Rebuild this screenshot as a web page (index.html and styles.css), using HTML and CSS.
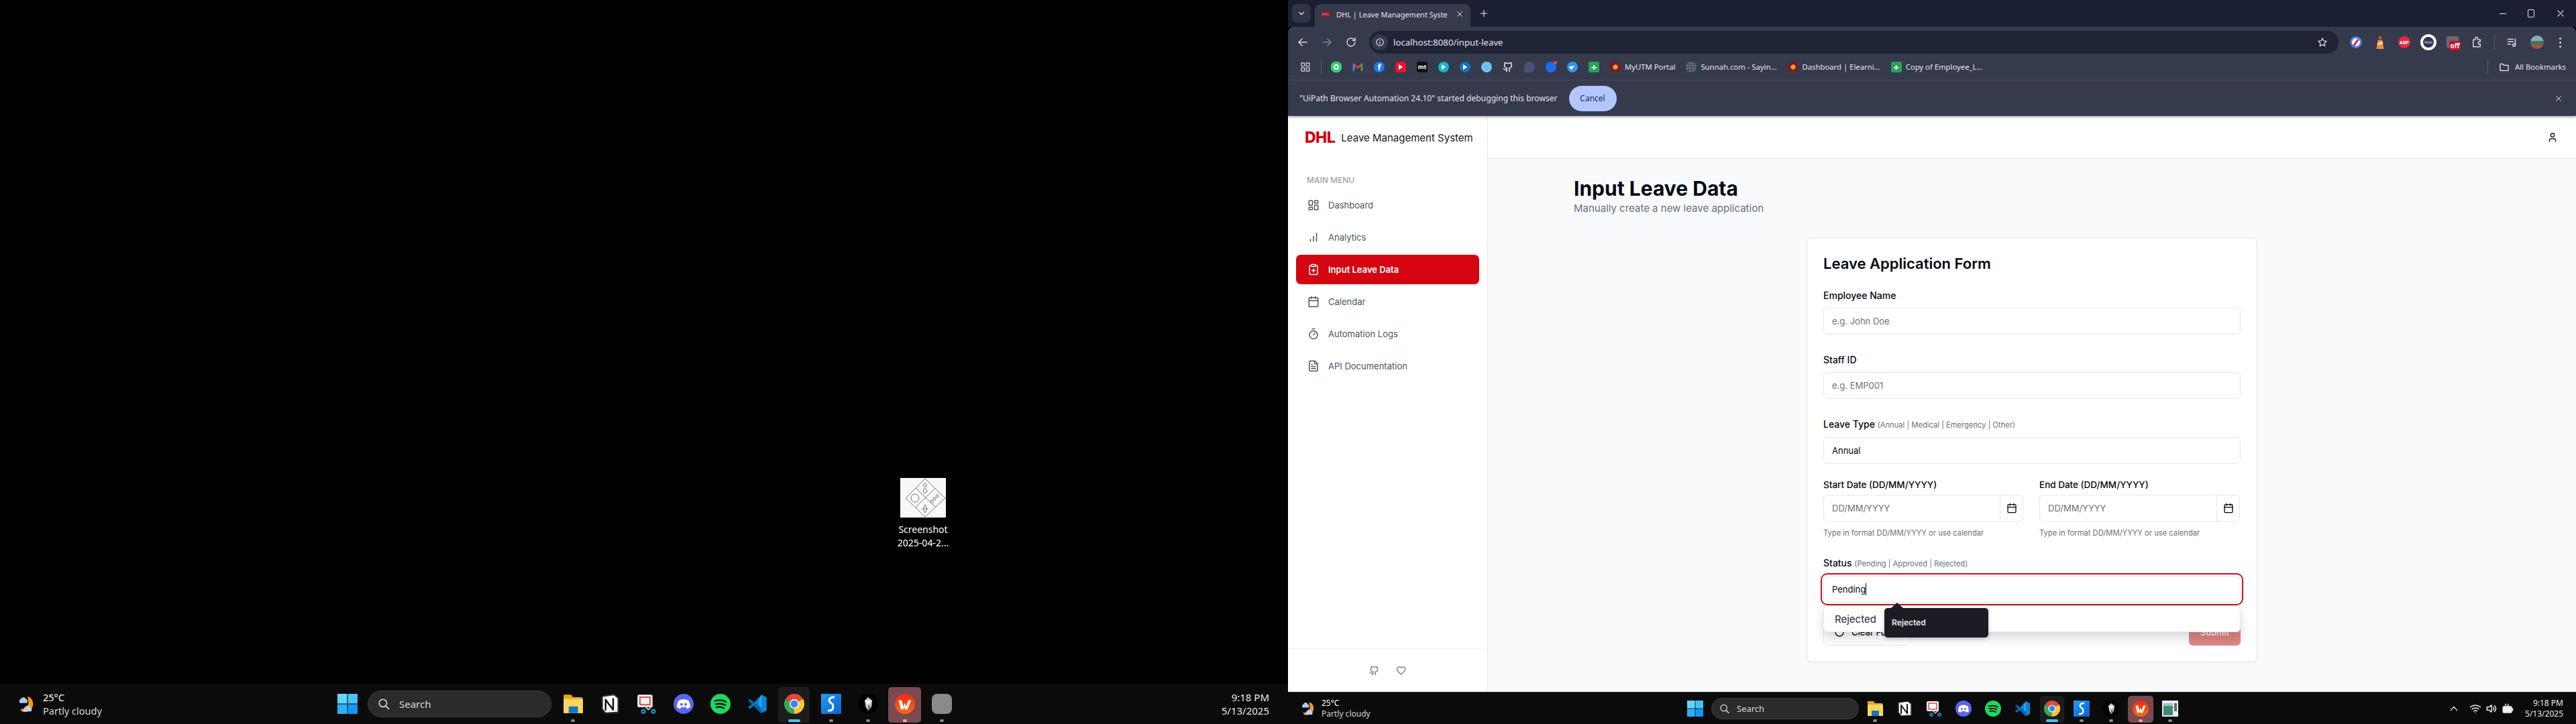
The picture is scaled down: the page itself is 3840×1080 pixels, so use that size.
FILE: index.html
```html
<!DOCTYPE html>
<html lang="en">
<head>
<meta charset="utf-8">
<title>DHL | Leave Management System</title>
<link rel="stylesheet" href="styles.css">
</head>
<body>
<svg class="defs" aria-hidden="true">
  <symbol id="i-weather" viewBox="0 0 24 24">
    <path d="M13 3a9.5 9.5 0 0 1 2 17 9 9 0 0 1-9 1l-2-3c5 1 10-2 10-8 0-3-1-5-1-7z" fill="#f59a1b"/>
    <path d="M3 9a3 3 0 0 1 2-3 3.2 3.2 0 0 1 6 0 3 3 0 0 1 1 5H4a2 2 0 0 1-1-2z" fill="#a9c8f0"/>
    <path d="M8 19a3 3 0 0 1 2-3 3.2 3.2 0 0 1 6 0 3 3 0 0 1 1 5H9a2 2 0 0 1-1-2z" fill="#b9d3f5"/>
  </symbol>
  <symbol id="i-win" viewBox="0 0 24 24">
    <rect x="0" y="0" width="11.6" height="11.6" fill="#5fd6fb"/>
    <rect x="12.4" y="0" width="11.6" height="11.6" fill="#45c3f7"/>
    <rect x="0" y="12.4" width="11.6" height="11.6" fill="#2bb0f5"/>
    <rect x="12.4" y="12.4" width="11.6" height="11.6" fill="#1596f0"/>
  </symbol>
  <symbol id="i-search" viewBox="0 0 24 24"><circle cx="10.5" cy="10.5" r="7.5" fill="none" stroke="#e6e6e6" stroke-width="2"/><path d="M16 16l6 6" stroke="#e6e6e6" stroke-width="2.2" stroke-linecap="round"/></symbol>
  <symbol id="i-folder" viewBox="0 0 24 24">
    <path d="M1 1h9l2 3h11v19H1z" fill="#e8a61c"/><rect x="1" y="6" width="23" height="17" fill="#fbd75b"/><rect x="7" y="15" width="11" height="8" rx="1" fill="#1478c8"/>
  </symbol>
  <symbol id="i-notion" viewBox="0 0 24 24">
    <path d="M3 3l14-2 5 4v17l-15 1-4-5z" fill="#fff" stroke="#333" stroke-width="1.6"/><path d="M7 7v12M7 7l9 12M16 6v13" stroke="#111" stroke-width="2" fill="none"/>
  </symbol>
  <symbol id="i-snip" viewBox="0 0 24 24">
    <rect x="1" y="1" width="18" height="15" rx="2" fill="#f3f3f3"/><rect x="4" y="4" width="12" height="9" fill="none" stroke="#d8472b" stroke-width="1.6" stroke-dasharray="2 1.4"/>
    <path d="M9 14l5 5M19 14l-5 5" stroke="#bbb" stroke-width="1.6"/><circle cx="8" cy="21" r="2" fill="none" stroke="#1aa1e8" stroke-width="1.5"/><circle cx="20" cy="21" r="2" fill="none" stroke="#1aa1e8" stroke-width="1.5"/>
  </symbol>
  <symbol id="i-discord" viewBox="0 0 24 24">
    <circle cx="12" cy="12" r="12" fill="#5865f2"/><path d="M6 8c4-2 8-2 12 0 1.5 3 2 6 2 8-1.5 1-3 1.5-4 2l-1-2H9l-1 2c-1-.5-2.5-1-4-2 0-2 .5-5 2-8z" fill="#fff"/><circle cx="9.5" cy="12.5" r="1.6" fill="#5865f2"/><circle cx="14.5" cy="12.5" r="1.6" fill="#5865f2"/>
  </symbol>
  <symbol id="i-spotify" viewBox="0 0 24 24">
    <circle cx="12" cy="12" r="12" fill="#1ed760"/><path d="M5.5 8.500c4.500-1.300 9-1 13 1M6.500 12.300c3.800-1 7.500-.7 11 1M7.500 16c3-.8 6-.5 8.500 1" fill="none" stroke="#0b1f12" stroke-width="2" stroke-linecap="round"/>
  </symbol>
  <symbol id="i-vscode" viewBox="0 0 24 24">
    <path d="M17 1l6 3v16l-6 3L6 13z" fill="#0a84d6"/><path d="M17 1v22l-3-2V7z" fill="#23a9f2"/><path d="M1 8l2-2 14 11v6l-3-2z" fill="#0065a9"/><path d="M1 16l2 2 6-5-2-2z" fill="#0078c4"/>
  </symbol>
  <symbol id="i-chrome" viewBox="0 0 24 24">
    <path d="M12 12L1.6 6A12 12 0 0 1 22.4 6z" fill="#e8443a"/><path d="M12 12L22.4 6A12 12 0 0 1 12 24z" fill="#f8c630"/><path d="M12 12L12 24A12 12 0 0 1 1.6 6z" fill="#3aa757"/><circle cx="12" cy="12" r="5.6" fill="#fff"/><circle cx="12" cy="12" r="4.4" fill="#3c82f0"/>
  </symbol>
  <symbol id="i-sapp" viewBox="0 0 24 24">
    <rect width="24" height="24" fill="url(#sg)"/><path d="M15 4c-4 0-6 2-5 5 .6 2 3 2 4 4M9 20c4 0 6-2 5-5" fill="none" stroke="#fff" stroke-width="2.4" stroke-dasharray="5 1.5"/>
  </symbol>
  <symbol id="i-black" viewBox="0 0 24 24">
    <circle cx="12" cy="12" r="12" fill="#000"/><path d="M12 4l5 4-1 8-4 4-3-5-1-7z" fill="#c9c9c9"/><path d="M8 8h8l-4 5z" fill="#fff"/><path d="M12 13l4 3-4 4z" fill="#777"/>
  </symbol>
  <symbol id="i-wps" viewBox="0 0 24 24">
    <circle cx="12" cy="12" r="12" fill="url(#wg)"/><path d="M4.5 7.5H8l2.500 8 1.500-5 1.500 5 2.500-8h3.500l-4.500 11h-3l-1-3-1 3h-3z" fill="#fff"/>
  </symbol>
  <symbol id="i-thumb" viewBox="0 0 24 24">
    <rect width="24" height="24" fill="#e9eef0"/><rect x="2" y="4" width="14" height="18" fill="#3f8a72"/><rect x="2" y="4" width="14" height="4" fill="#9cc0cf"/><rect x="18" y="4" width="4" height="12" fill="#5d6a74"/>
  </symbol>
  <defs>
    <linearGradient id="sg" x1="0" y1="0" x2="1" y2="1"><stop offset="0" stop-color="#1aa0f0"/><stop offset="1" stop-color="#0c5fd0"/></linearGradient>
    <linearGradient id="wg" x1="0" y1="0" x2="0" y2="1"><stop offset="0" stop-color="#f02a1a"/><stop offset="1" stop-color="#ff6a14"/></linearGradient>
  </defs>

  <symbol id="l-dash" viewBox="0 0 24 24"><rect x="3" y="3" width="7" height="9" rx="1"/><rect x="14" y="3" width="7" height="5" rx="1"/><rect x="14" y="12" width="7" height="9" rx="1"/><rect x="3" y="16" width="7" height="5" rx="1"/></symbol>
  <symbol id="l-chart" viewBox="0 0 24 24"><path d="M12 20V10M18 20V4M6 20v-4"/></symbol>
  <symbol id="l-clip" viewBox="0 0 24 24"><rect x="8" y="2" width="8" height="4" rx="1"/><path d="M16 4h2a2 2 0 0 1 2 2v14a2 2 0 0 1-2 2H6a2 2 0 0 1-2-2V6a2 2 0 0 1 2-2h2M9 14h6M12 17v-6"/></symbol>
  <symbol id="l-cal" viewBox="0 0 24 24"><path d="M8 2v4M16 2v4"/><rect x="3" y="4" width="18" height="18" rx="2"/><path d="M3 10h18"/></symbol>
  <symbol id="l-timer" viewBox="0 0 24 24"><path d="M10 2h4M12 14l3-3"/><circle cx="12" cy="14" r="8"/></symbol>
  <symbol id="l-file" viewBox="0 0 24 24"><path d="M15 2H6a2 2 0 0 0-2 2v16a2 2 0 0 0 2 2h12a2 2 0 0 0 2-2V7Z"/><path d="M14 2v4a2 2 0 0 0 2 2h4M10 9H8M16 13H8M16 17H8"/></symbol>
  <symbol id="l-user" viewBox="0 0 24 24"><path d="M19 21v-2a4 4 0 0 0-4-4H9a4 4 0 0 0-4 4v2"/><circle cx="12" cy="7" r="4"/></symbol>
  <symbol id="l-github" viewBox="0 0 24 24"><path d="M15 22v-4a4.8 4.8 0 0 0-1-3.500c3 0 6-2 6-5.500.08-1.250-.27-2.480-1-3.500.28-1.150.28-2.350 0-3.500 0 0-1 0-3 1.500-2.640-.5-5.360-.5-8 0C6 2 5 2 5 2c-.3 1.150-.3 2.350 0 3.500A5.400 5.400 0 0 0 4 9c0 3.500 3 5.500 6 5.500-.39.49-.68 1.050-.85 1.650-.17.6-.22 1.230-.15 1.850v4"/><path d="M9 18c-4.510 2-5-2-7-2"/></symbol>
  <symbol id="l-heart" viewBox="0 0 24 24"><path d="M19 14c1.490-1.460 3-3.210 3-5.500A5.500 5.500 0 0 0 16.500 3c-1.760 0-3 .5-4.500 2-1.500-1.500-2.740-2-4.500-2A5.500 5.500 0 0 0 2 8.500c0 2.300 1.500 4.050 3 5.500l7 7Z"/></symbol>
  <symbol id="l-reset" viewBox="0 0 24 24"><path d="M3 12a9 9 0 1 0 9-9 9.750 9.750 0 0 0-6.740 2.740L3 8"/><path d="M3 3v5h5"/></symbol>
  <symbol id="c-back" viewBox="0 0 24 24"><path d="M20 12H5M11 5l-7 7 7 7"/></symbol>
  <symbol id="c-fwd" viewBox="0 0 24 24"><path d="M4 12h15M13 5l7 7-7 7"/></symbol>
  <symbol id="c-reload" viewBox="0 0 24 24"><path d="M20 12a8 8 0 1 1-2.300-5.700L20 8.500M20 3.500v5h-5"/></symbol>
  <symbol id="c-info" viewBox="0 0 24 24"><circle cx="12" cy="12" r="9"/><path d="M12 11v6M12 7.500v.1"/></symbol>
  <symbol id="c-star" viewBox="0 0 24 24"><path d="M12 3l2.800 5.900 6.400.8-4.700 4.400 1.200 6.400L12 17.400l-5.700 3.100 1.200-6.400L2.800 9.700l6.400-.8z"/></symbol>
  <symbol id="c-down" viewBox="0 0 24 24"><path d="M6 9l6 6 6-6"/></symbol>
  <symbol id="c-x" viewBox="0 0 24 24"><path d="M5 5l14 14M19 5L5 19"/></symbol>
  <symbol id="c-plus" viewBox="0 0 24 24"><path d="M12 4v16M4 12h16"/></symbol>
  <symbol id="c-puzzle" viewBox="0 0 24 24"><path d="M5 7h4V4.500a2.500 2.500 0 0 1 5 0V7h5v4h-1.500a2.500 2.500 0 0 0 0 5H19v5H5z"/></symbol>
  <symbol id="c-music" viewBox="0 0 24 24"><path d="M3 6h11M3 11h11M3 16h6M18 5v12"/><circle cx="15.500" cy="17.500" r="2.500"/></symbol>
  <symbol id="c-grid" viewBox="0 0 24 24"><rect x="3" y="3" width="7" height="7"/><rect x="14" y="3" width="7" height="7"/><rect x="3" y="14" width="7" height="7"/><rect x="14" y="14" width="7" height="7"/></symbol>
  <symbol id="c-folder" viewBox="0 0 24 24"><path d="M3 5h6l2 3h10v12H3z"/></symbol>
  <symbol id="c-caret" viewBox="0 0 24 24"><path d="M5 16l7-8 7 8"/></symbol>
  <symbol id="c-wifi" viewBox="0 0 24 24"><path d="M2 9a15 15 0 0 1 20 0M5.500 13a10 10 0 0 1 13 0M9 17a5 5 0 0 1 6 0M12 20.500v.1"/></symbol>
  <symbol id="c-vol" viewBox="0 0 24 24"><path d="M3 9v6h4l5 4V5L7 9zM15.500 9a4 4 0 0 1 0 6M18 6a8 8 0 0 1 0 12"/></symbol>
  <symbol id="c-batt" viewBox="0 0 24 24"><rect x="3" y="8" width="17" height="12" rx="2" fill="currentColor"/><path d="M8 3v5M13 3v5M22 12v4"/></symbol>
</svg>

<div class="screens">
  <!-- left monitor -->
  <section class="monitor monitor-left">
    <div class="desktop">
      <div class="desk-icon">
        <svg class="desk-thumb" viewBox="0 0 68 59">
          <rect width="68" height="59" fill="#f7f8fa"/>
          <g fill="none" stroke="#777" stroke-width="1">
            <path d="M37 1l30 29-30 28L8 30z"/><path d="M23 15l30 29M52 15L23 44"/>
            <circle cx="22" cy="30" r="6"/><circle cx="37" cy="11" r="2.5"/><circle cx="37" cy="19" r="3"/>
            <circle cx="47" cy="35" r="2"/><circle cx="51" cy="31" r="2"/><circle cx="55" cy="27" r="2"/>
            <path d="M37 40l3 6-3 6-3-6zM33 46h8"/>
          </g>
        </svg>
        <div class="desk-label">Screenshot<br>2025-04-2...</div>
      </div>
    </div>
    <footer class="taskbar tb-large">
      <div class="weather">
        <svg class="weather-icon"><use href="#i-weather"/></svg>
        <div class="weather-text"><div>25°C</div><div class="weather-sub">Partly cloudy</div></div>
      </div>
      <div class="tb-slot"><svg class="tb-icon"><use href="#i-win"/></svg></div>
      <div class="tb-search"><svg class="tb-search-icon"><use href="#i-search"/></svg><span>Search</span></div>
      <div class="tb-slot run"><svg class="tb-icon"><use href="#i-folder"/></svg></div>
      <div class="tb-slot"><svg class="tb-icon"><use href="#i-notion"/></svg></div>
      <div class="tb-slot"><svg class="tb-icon"><use href="#i-snip"/></svg></div>
      <div class="tb-slot"><svg class="tb-icon"><use href="#i-discord"/></svg></div>
      <div class="tb-slot"><svg class="tb-icon"><use href="#i-spotify"/></svg></div>
      <div class="tb-slot"><svg class="tb-icon"><use href="#i-vscode"/></svg></div>
      <div class="tb-slot active"><svg class="tb-icon"><use href="#i-chrome"/></svg></div>
      <div class="tb-slot run"><svg class="tb-icon"><use href="#i-sapp"/></svg></div>
      <div class="tb-slot run"><svg class="tb-icon"><use href="#i-black"/></svg></div>
      <div class="tb-slot alert"><svg class="tb-icon"><use href="#i-wps"/></svg></div>
      <div class="tb-slot run"><span class="tb-gray"></span></div>
      <div class="tb-clock"><div>9:18 PM</div><div>5/13/2025</div></div>
    </footer>
  </section>

  <!-- right monitor -->
  <section class="monitor monitor-right">
    <header class="chrome">
      <div class="tabstrip">
        <div class="tab-search"><svg class="ic-14"><use href="#c-down"/></svg></div>
        <div class="tab">
          <span class="favicon-dhl">DHL</span>
          <span class="tab-title">DHL | Leave Management Syste</span>
          <svg class="ic-12"><use href="#c-x"/></svg>
        </div>
        <svg class="ic-14 new-tab"><use href="#c-plus"/></svg>
        <div class="win-ctrls">
          <span class="win-min"></span>
          <span class="win-max"></span>
          <svg class="ic-14"><use href="#c-x"/></svg>
        </div>
      </div>
      <div class="toolbar">
        <svg class="tool"><use href="#c-back"/></svg>
        <svg class="tool dim"><use href="#c-fwd"/></svg>
        <svg class="tool"><use href="#c-reload"/></svg>
        <div class="omnibox">
          <span class="site-info"><svg class="ic-14"><use href="#c-info"/></svg></span>
          <span class="url">localhost:8080/input-leave</span>
          <svg class="ic-16 star"><use href="#c-star"/></svg>
        </div>
        <div class="exts">
          <span class="ext ext-block"></span>
          <svg class="ext-svg" viewBox="0 0 16 20"><path d="M8 1l2 3v2H6V4z" fill="#e2562a"/><path d="M5 7h6l2 12H3z" fill="#f58a3c"/><path d="M4.5 11l7-2 .5 3-8 2z" fill="#ffd9b8"/></svg>
          <span class="ext ext-abp">ABP</span>
          <span class="ext ext-web">Web</span>
          <span class="ext ext-off"><span class="off-badge">off</span></span>
          <svg class="ic-18"><use href="#c-puzzle"/></svg>
          <span class="tool-sep"></span>
          <svg class="ic-18"><use href="#c-music"/></svg>
          <span class="avatar"></span>
          <span class="kebab"></span>
        </div>
      </div>
      <nav class="bookmarks">
        <svg class="ic-16 bm-apps"><use href="#c-grid"/></svg>
        <span class="bm-sep"></span>
        <span class="bm"><span class="fav f-wa"></span></span>
        <span class="bm"><svg class="fav-svg" viewBox="0 0 16 16"><path d="M2 14V4l6 5 6-5v10" fill="none" stroke="#ea4335" stroke-width="2.4"/><path d="M2 14V4" stroke="#4285f4" stroke-width="2.4"/><path d="M14 14V4" stroke="#34a853" stroke-width="2.4"/></svg></span>
        <span class="bm"><span class="fav f-fb">f</span></span>
        <span class="bm"><span class="fav f-yt"></span></span>
        <span class="bm"><span class="fav f-mt">mt</span></span>
        <span class="bm"><span class="fav f-play1"></span></span>
        <span class="bm"><span class="fav f-play2"></span></span>
        <span class="bm"><span class="fav f-stripe"></span></span>
        <span class="bm"><svg class="fav-svg gh"><use href="#l-github"/></svg></span>
        <span class="bm"><span class="fav f-leaf"></span></span>
        <span class="bm"><span class="fav f-msg"></span></span>
        <span class="bm"><span class="fav f-tg"></span></span>
        <span class="bm"><span class="fav f-sheet">+</span></span>
        <span class="bm named"><span class="fav f-utm"></span>MyUTM Portal</span>
        <span class="bm named"><span class="fav f-sun"></span>Sunnah.com - Sayin...</span>
        <span class="bm named"><span class="fav f-utm"></span>Dashboard | Elearni...</span>
        <span class="bm named"><span class="fav f-sheet">+</span>Copy of Employee_L...</span>
        <span class="bm-all"><span class="bm-sep"></span><svg class="ic-16"><use href="#c-folder"/></svg>All Bookmarks</span>
      </nav>
      <div class="infobar">
        <span>"UiPath Browser Automation 24.10" started debugging this browser</span>
        <button class="cancel" type="button">Cancel</button>
        <svg class="ic-12 info-x"><use href="#c-x"/></svg>
      </div>
    </header>

    <div class="app">
      <aside class="sidebar">
        <div class="brand"><span class="dhl">DHL</span><span class="brand-name">Leave Management System</span></div>
        <div class="menu-label">MAIN MENU</div>
        <ul class="nav">
          <li class="nav-item"><svg class="nav-icon"><use href="#l-dash"/></svg>Dashboard</li>
          <li class="nav-item"><svg class="nav-icon"><use href="#l-chart"/></svg>Analytics</li>
          <li class="nav-item current"><svg class="nav-icon"><use href="#l-clip"/></svg>Input Leave Data</li>
          <li class="nav-item"><svg class="nav-icon"><use href="#l-cal"/></svg>Calendar</li>
          <li class="nav-item"><svg class="nav-icon"><use href="#l-timer"/></svg>Automation Logs</li>
          <li class="nav-item"><svg class="nav-icon"><use href="#l-file"/></svg>API Documentation</li>
        </ul>
        <div class="side-foot">
          <svg class="foot-icon"><use href="#l-github"/></svg>
          <svg class="foot-icon"><use href="#l-heart"/></svg>
        </div>
      </aside>
      <div class="content">
        <div class="topbar"><svg class="ic-16 user"><use href="#l-user"/></svg></div>
        <main class="page">
          <h1 class="page-title">Input Leave Data</h1>
          <p class="page-sub">Manually create a new leave application</p>
          <form class="card">
            <h2 class="card-title">Leave Application Form</h2>
            <div class="field">
              <div class="label">Employee Name</div>
              <div class="input placeholder">e.g. John Doe</div>
            </div>
            <div class="field">
              <div class="label">Staff ID</div>
              <div class="input placeholder">e.g. EMP001</div>
            </div>
            <div class="field">
              <div class="label">Leave Type <span class="hint">(Annual | Medical | Emergency | Other)</span></div>
              <div class="input">Annual</div>
            </div>
            <div class="dates">
              <div class="date-field">
                <div class="label label-tight">Start Date (DD/MM/YYYY)</div>
                <div class="input input-date"><span class="placeholder date-text">DD/MM/YYYY</span><span class="date-btn"><svg class="ic-16"><use href="#l-cal"/></svg></span></div>
                <div class="help">Type in format DD/MM/YYYY or use calendar</div>
              </div>
              <div class="date-field">
                <div class="label label-tight">End Date (DD/MM/YYYY)</div>
                <div class="input input-date"><span class="placeholder date-text">DD/MM/YYYY</span><span class="date-btn"><svg class="ic-16"><use href="#l-cal"/></svg></span></div>
                <div class="help">Type in format DD/MM/YYYY or use calendar</div>
              </div>
            </div>
            <div class="field field-status">
              <div class="label">Status <span class="hint">(Pending | Approved | Rejected)</span></div>
              <div class="input focused"><span class="caret-text">Pending</span></div>
              <div class="suggest">Rejected</div>
              <div class="tip">Rejected</div>
            </div>
            <div class="actions">
              <button class="btn-clear" type="button"><svg class="ic-16"><use href="#l-reset"/></svg>Clear Form</button>
              <button class="btn-submit" type="button">Submit</button>
            </div>
          </form>
        </main>
      </div>
    </div>

    <footer class="taskbar tb-small">
      <div class="weather">
        <svg class="weather-icon"><use href="#i-weather"/></svg>
        <div class="weather-text"><div>25°C</div><div class="weather-sub">Partly cloudy</div></div>
      </div>
      <div class="tb-slot"><svg class="tb-icon"><use href="#i-win"/></svg></div>
      <div class="tb-search"><svg class="tb-search-icon"><use href="#i-search"/></svg><span>Search</span></div>
      <div class="tb-slot run"><svg class="tb-icon"><use href="#i-folder"/></svg></div>
      <div class="tb-slot"><svg class="tb-icon"><use href="#i-notion"/></svg></div>
      <div class="tb-slot"><svg class="tb-icon"><use href="#i-snip"/></svg></div>
      <div class="tb-slot"><svg class="tb-icon"><use href="#i-discord"/></svg></div>
      <div class="tb-slot"><svg class="tb-icon"><use href="#i-spotify"/></svg></div>
      <div class="tb-slot"><svg class="tb-icon"><use href="#i-vscode"/></svg></div>
      <div class="tb-slot active"><svg class="tb-icon"><use href="#i-chrome"/></svg></div>
      <div class="tb-slot run"><svg class="tb-icon"><use href="#i-sapp"/></svg></div>
      <div class="tb-slot run"><svg class="tb-icon"><use href="#i-black"/></svg></div>
      <div class="tb-slot alert"><svg class="tb-icon"><use href="#i-wps"/></svg></div>
      <div class="tb-slot run"><svg class="tb-icon"><use href="#i-thumb"/></svg></div>
      <div class="tray">
        <svg class="ic-16"><use href="#c-caret"/></svg>
        <svg class="ic-18"><use href="#c-wifi"/></svg>
        <svg class="ic-18"><use href="#c-vol"/></svg>
        <svg class="ic-18"><use href="#c-batt"/></svg>
      </div>
      <div class="tb-clock"><div>9:18 PM</div><div>5/13/2025</div></div>
    </footer>
  </section>
</div>
</body>
</html>
```
FILE: styles.css
```css
* { box-sizing: border-box; }
html, body { margin: 0; padding: 0; width: 3840px; height: 1080px; overflow: hidden; background: #000; }
body { font-family: "Inter", "Liberation Sans", sans-serif; }
.defs { position: absolute; width: 0; height: 0; overflow: hidden; }
svg { display: block; flex: none; }
svg use { fill: none; stroke: currentColor; stroke-width: 2; stroke-linecap: round; stroke-linejoin: round; }
symbol[id^="i-"] { stroke: none; }
button { font: inherit; border: 0; }
h1, h2, p, ul { margin: 0; padding: 0; }
ul { list-style: none; }

.ic-12 { width: 12px; height: 12px; }
.ic-14 { width: 14px; height: 14px; }
.ic-16 { width: 16px; height: 16px; }
.ic-18 { width: 18px; height: 18px; }

.screens { display: flex; width: 3840px; height: 1080px; }
.monitor { width: 1920px; height: 1080px; display: flex; flex-direction: column; }

/* desktop */
.desktop { flex: 1; position: relative; background: #000; }
.desk-icon { position: absolute; left: 1326px; top: 713px; width: 100px; text-align: center; font-family: "Noto Sans", sans-serif; color: #fff; font-size: 14px; line-height: 20px; }
.desk-thumb { width: 68px; height: 59px; margin: 0 auto 8px; }

/* taskbar */
.taskbar { display: flex; align-items: center; flex: none; background: #0b0b0b; color: #fff; font-family: "Noto Sans", sans-serif; }
.tb-large { height: 60px; --slot: 55px; padding-left: 25px; }
.tb-small { height: 48px; --slot: 44px; padding-left: 18px; border-top: 1px solid #333; }
.weather { display: flex; align-items: center; flex: none; }
.tb-large .weather { width: 465px; gap: 9px; font-size: 14.5px; line-height: 20px; }
.tb-small .weather { width: 567px; gap: 7px; font-size: 12px; line-height: 16px; }
.tb-large .weather-icon { width: 30px; height: 30px; }
.tb-small .weather-icon { width: 25px; height: 25px; }
.weather-sub { color: #d4d4d4; }
.tb-slot { width: var(--slot); height: 100%; display: flex; align-items: center; justify-content: center; position: relative; flex: none; }
.tb-large .tb-icon, .tb-gray { width: 30px; height: 30px; }
.tb-small .tb-icon { width: 24px; height: 24px; }
.tb-gray { background: #8a8a8a; border-radius: 8px; }
.tb-search { display: flex; align-items: center; flex: none; background: #2b2b2b; border: 1px solid #3c3c3c; border-radius: 20px; color: #d8d8d8; }
.tb-large .tb-search { width: 274px; height: 40px; margin: 0 4px 0 3px; padding-left: 14px; gap: 14px; font-size: 15px; }
.tb-small .tb-search { width: 220px; height: 32px; margin: 0 2px 0 2px; padding-left: 11px; gap: 11px; font-size: 13px; }
.tb-large .tb-search-icon { width: 18px; height: 20px; }
.tb-small .tb-search-icon { width: 15px; height: 16px; }
.tb-slot.run::after, .tb-slot.alert::after, .tb-slot.active::after { content: ""; position: absolute; left: 50%; bottom: 3px; width: 6px; height: 4px; margin-left: -3px; border-radius: 3px; background: #8b8b8b; }
.tb-slot.active::before { content: ""; position: absolute; inset: 5px 4px 2px; background: #1c1c1c; border-radius: 5px; z-index: 0; }
.tb-slot.active .tb-icon, .tb-slot.alert .tb-icon { position: relative; z-index: 1; }
.tb-slot.active::after { width: 18px; margin-left: -9px; background: #4cc2ff; }
.tb-slot.alert::before { content: ""; position: absolute; inset: 5px 3px 2px; background: #7a4a50; border-radius: 5px; }
.tb-slot.alert::after { background: #f5a3b3; z-index: 1; }
.tb-clock { margin-left: auto; text-align: right; color: #e8e8e8; flex: none; }
.tb-large .tb-clock { padding-right: 28px; font-size: 15px; line-height: 20px; }
.tb-small .tb-clock { margin-left: 17px; padding-right: 19px; font-size: 12px; line-height: 16px; }
.tray { margin-left: auto; display: flex; align-items: center; gap: 6px; color: #f0f0f0; }
.tray > svg:first-child { margin-right: 9px; }

/* chrome */
.chrome { flex: none; color: #e4e6ee; font-family: "Noto Sans", sans-serif; font-size: 11.3px; box-shadow: 0 2px 3px rgba(0,0,0,.3); position: relative; z-index: 2; }
.tabstrip { height: 40px; background: #1a1f33; display: flex; align-items: flex-end; padding-left: 6px; }
.tab-search { width: 28px; height: 28px; margin-bottom: 6px; background: #2f3446; border-radius: 8px; display: flex; align-items: center; justify-content: center; }
.tab { width: 232px; height: 34px; margin-left: 6px; background: #363a4d; border-radius: 9px 9px 0 0; display: flex; align-items: center; padding: 0 10px 4px 8px; }
.favicon-dhl { width: 16px; font-size: 6px; line-height: 10px; font-weight: 800; font-style: italic; color: #ff4d4d; background: #5a2d3a; text-align: center; flex: none; }
.tab-title { margin-left: 8px; flex: 1; white-space: nowrap; font-size: 11px; }
.new-tab { margin: 0 0 13px 13px; }
.win-ctrls { margin-left: auto; display: flex; align-items: center; gap: 32px; height: 40px; padding-right: 16px; }
.win-min { width: 10px; height: 1px; background: #e4e6ee; }
.win-max { width: 10px; height: 12px; border: 1px solid #e4e6ee; border-radius: 2px; }
.toolbar { height: 40px; background: #363a4d; border-radius: 8px 8px 0 0; display: flex; align-items: flex-start; padding: 6px 0 0 13px; gap: 18px; }
.tool { width: 18px; height: 18px; margin-top: 8px; color: #d4d7e2; }
.tool.dim { color: #81859a; }
.omnibox { width: 1445px; height: 34px; background: #1f2336; border-radius: 17px; display: flex; align-items: center; padding: 0 16px 0 4px; }
.site-info { width: 24px; height: 24px; border-radius: 50%; background: #363a4d; display: flex; align-items: center; justify-content: center; }
.url { margin-left: 8px; font-size: 13.2px; flex: 1; }
.star { color: #d4d7e2; }
.exts { display: flex; align-items: center; height: 34px; margin-left: -1px; gap: 18px; color: #d4d7e2; }
.ext { width: 18px; height: 18px; flex: none; border-radius: 50%; display: flex; align-items: center; justify-content: center; }
.ext-svg { width: 18px; height: 22px; }
.ext-block { background: #fff; border: 3px solid #4a7fe0; position: relative; }
.ext-block::after { content: ""; width: 12px; height: 3px; background: #d9303a; transform: rotate(-55deg); }
.ext-abp { background: #e6273e; color: #fff; font-size: 7px; font-weight: 700; }
.ext-web { width: 24px; height: 24px; margin: 0 -3px; background: #2d3550; border: 4px solid #fff; color: #d4d7e2; font-size: 6px; }
.ext-off { background: #6a6a6a; border-radius: 3px; position: relative; }
.off-badge { position: absolute; left: 4px; top: 7px; width: 17px; height: 14px; background: #c8102e; color: #fff; font-size: 10px; line-height: 14px; font-weight: 700; text-align: center; border-radius: 2px; }
.tool-sep { width: 1px; height: 22px; background: #555a6d; margin: 0 -1px; }
.avatar { width: 20px; height: 20px; border-radius: 50%; background: linear-gradient(#8fa7b8 0 40%, #3e7a49 40% 70%, #b34a4a 70%); }
.kebab { width: 3px; height: 3px; margin-left: 5px; border-radius: 50%; background: #d4d7e2; box-shadow: 0 -6px 0 #d4d7e2, 0 6px 0 #d4d7e2; }
.bookmarks { height: 40px; background: #363a4d; border-bottom: 1px solid #44485a; display: flex; align-items: center; padding-left: 18px; white-space: nowrap; }
.bm-apps { color: #c8cbd8; }
.bm-sep { width: 1px; height: 22px; background: #555a6d; margin: 0 6px 0 15px; flex: none; }
.bm { width: 32px; display: flex; align-items: center; justify-content: center; gap: 6px; flex: none; }
.bm.named { width: auto; padding: 0 8px; }
.fav, .fav-svg { width: 16px; height: 16px; flex: none; }
.fav { display: flex; align-items: center; justify-content: center; border-radius: 50%; color: #fff; font-weight: 700; }
.gh { color: #fff; }
.f-wa { background: #25d366; box-shadow: inset 0 0 0 4px #25d366, inset 0 0 0 6px #fff; }
.f-fb { background: #1877f2; font-size: 13px; }
.f-yt { background: #e8132c; border-radius: 4px; }
.f-yt::after, .f-play1::after, .f-play2::after { content: ""; border-left: 6px solid #fff; border-top: 4px solid transparent; border-bottom: 4px solid transparent; }
.f-mt { background: #111; border-radius: 3px; font-size: 9px; }
.f-play1 { background: #16b6d2; }
.f-play2 { background: #1273b8; }
.f-stripe { background: repeating-linear-gradient(45deg, #58b5ee 0 2px, #8fd0f7 2px 4px); }
.f-leaf { background: linear-gradient(135deg, #3b5a6a, #5a4a7a); border-radius: 50% 50% 50% 10%; }
.f-msg { background: #1a6cf0; position: relative; }
.f-msg::after { content: ""; position: absolute; right: -1px; top: -1px; width: 5px; height: 5px; border-radius: 50%; background: #f0403a; }
.f-tg { background: #2f96e8; }
.f-tg::after { content: ""; border-left: 8px solid #fff; border-top: 3px solid transparent; border-bottom: 3px solid transparent; transform: rotate(-30deg); }
.f-sheet { background: #23a455; border-radius: 2px; font-size: 15px; line-height: 16px; }
.f-utm { background: radial-gradient(#e0a020 0 30%, #7a1a20 35%); }
.f-sun { background: radial-gradient(#5d7a84 1px, #3e4a55 2px) 0 0/4px 4px; }
.bm-all { margin-left: auto; padding-right: 15px; display: flex; align-items: center; gap: 8px; }
.bm-all .bm-sep { margin: 0 8px 0 0; }
.infobar { height: 53px; background: #363a4d; display: flex; align-items: center; padding: 0 20px 0 17px; font-size: 12.1px; }
.cancel { height: 38px; width: 71px; margin-left: 17px; border-radius: 19px; background: #b3c6ff; color: #1b2a52; font-family: "Noto Sans", sans-serif; font-size: 12px; }
.info-x { margin-left: auto; }

/* app */
.app { flex: 1; min-height: 0; display: flex; background: #f8fafc; overflow: hidden; }
.sidebar { width: 298px; flex: none; background: #fff; border-right: 1px solid #e5e7eb; display: flex; flex-direction: column; }
.brand { height: 64px; display: flex; align-items: center; padding-left: 25px; gap: 9px; }
.dhl { color: #d40511; font-size: 23px; font-weight: 800; letter-spacing: -.5px; }
.brand-name { font-size: 15px; color: #111827; }
.menu-label { margin: 24px 0 7px 28px; font-size: 12px; line-height: 16px; color: #9ca3af; font-weight: 500; }
.nav { flex: 1; padding: 0 12px; display: flex; flex-direction: column; gap: 4px; }
.nav-item { height: 44px; border-radius: 7px; display: flex; align-items: center; gap: 13px; padding-left: 17px; font-size: 13px; color: #4b5563; }
.nav-icon { width: 18px; height: 18px; }
.nav-item.current { background: #d40511; color: #fff; font-weight: 600; }
.side-foot { height: 65px; border-top: 1px solid #f0f1f3; display: flex; align-items: center; justify-content: center; gap: 25px; color: #6b7280; }
.foot-icon { width: 15px; height: 15px; }
.content { flex: 1; min-width: 0; display: flex; flex-direction: column; }
.topbar { height: 64px; flex: none; background: #fff; border-bottom: 1px solid #e5e7eb; display: flex; align-items: center; justify-content: flex-end; padding-right: 27px; color: #111827; }
.page { width: 1366px; margin: 0 auto; padding-top: 26px; }
.page-title { font-size: 30px; line-height: 36px; font-weight: 700; color: #030712; }
.page-sub { font-size: 15px; line-height: 24px; color: #667085; margin-bottom: 31px; }
.card { width: 672px; margin: 0 auto; background: #fff; border: 1px solid #e5e7eb; border-radius: 8px; padding: 24px; box-shadow: 0 1px 2px rgba(0,0,0,.04); }
.card-title { font-size: 22px; line-height: 28px; font-weight: 600; color: #030712; margin-bottom: 24px; }
.field { margin-bottom: 28px; position: relative; }
.label { font-size: 14px; line-height: 20px; font-weight: 500; color: #030712; margin-bottom: 8px; white-space: nowrap; }
.label-tight { margin-bottom: 5px; font-size: 13.5px; }
.hint { font-size: 11.2px; font-weight: 400; color: #6b7280; }
.input { height: 40px; background: #fff; border: 1px solid #e2e8f0; border-radius: 6px; display: flex; align-items: center; padding: 0 12px; font-size: 13px; color: #030712; }
.input.placeholder, .placeholder { color: #6b7280; }
.dates { display: grid; grid-template-columns: 298px 299px; column-gap: 24px; margin: -7px 0 27px; }
.input-date { padding: 0 0 0 12px; }
.date-text { flex: 1; }
.date-btn { width: 34px; height: 100%; border-left: 1px solid #e2e8f0; display: flex; align-items: center; justify-content: center; color: #030712; }
.help { margin-top: 9px; font-size: 11.2px; line-height: 16px; color: #6b7280; white-space: nowrap; }
.field-status { margin-bottom: 24px; }
.focused { box-shadow: 0 0 0 2px #fff, 0 0 0 4px #c8101a; }
.caret-text { border-right: 1px solid #030712; line-height: 18px; }
.suggest { position: absolute; z-index: 3; left: 0; right: 0; top: 73px; height: 40px; background: #fff; border: 1px solid #e2e8f0; border-radius: 6px; box-shadow: 0 8px 16px rgba(0,0,0,.16); display: flex; align-items: center; padding-left: 16px; font-size: 15px; color: #1f2937; }
.tip { position: absolute; z-index: 4; left: 91px; top: 77px; width: 155px; height: 44px; background: #1c1d24; border-radius: 5px; color: #e8eaf0; font-size: 12px; font-weight: 600; padding: 14px 0 0 11px; line-height: 16px; box-shadow: 0 2px 6px rgba(0,0,0,.2); }
.tip::before { content: ""; position: absolute; left: 10px; top: -8px; border-left: 9px solid transparent; border-right: 9px solid transparent; border-bottom: 8px solid #1c1d24; }
.actions { display: flex; justify-content: space-between; height: 40px; }
.btn-clear { width: 130px; height: 40px; background: #fff; border: 1px solid #e2e8f0; border-radius: 6px; display: flex; align-items: center; gap: 10px; padding-left: 15px; font-size: 13px; font-weight: 500; color: #030712; }
.btn-submit { width: 77px; height: 40px; background: #e08585; border-radius: 6px; color: #fff; font-size: 13px; font-weight: 500; }
```
